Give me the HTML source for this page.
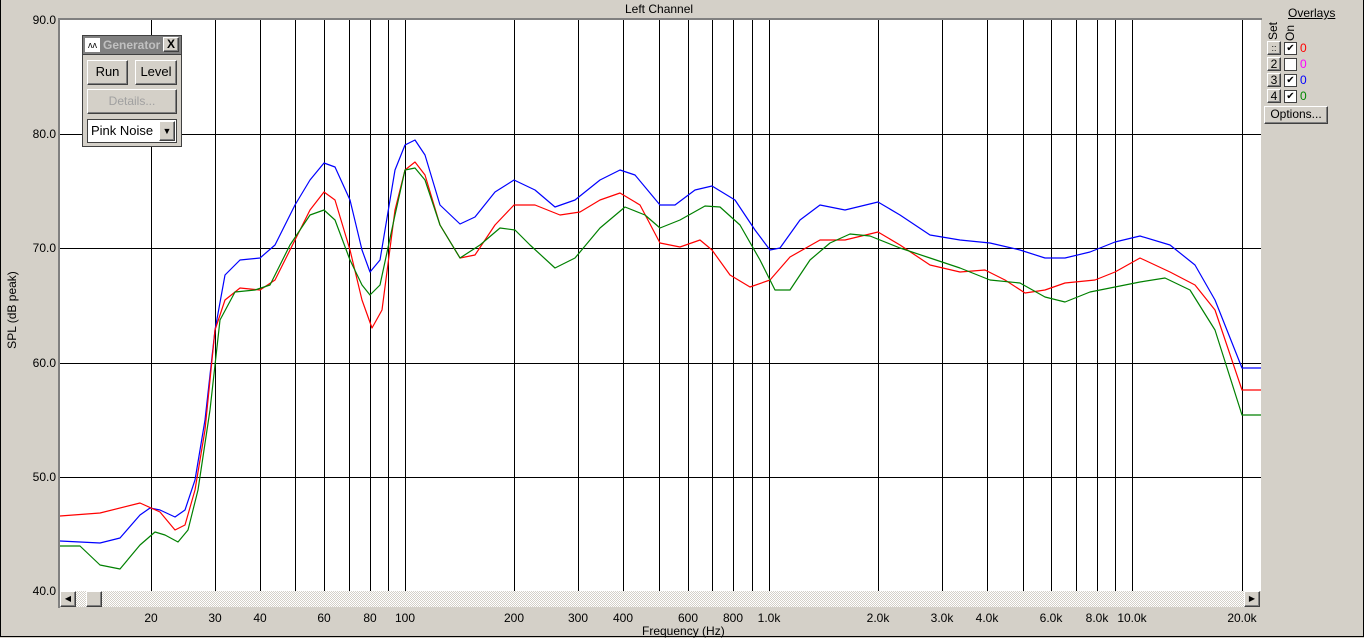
<!DOCTYPE html><html><head><style>
body{margin:0;width:1364px;height:638px;background:#d4d0c8;font-family:"Liberation Sans",sans-serif;font-size:12px;position:relative;overflow:hidden}
.a{position:absolute}
.btn{position:absolute;background:#d4d0c8;border:1px solid;border-color:#fff #404040 #404040 #fff;box-shadow:inset -1px -1px #808080;text-align:center;box-sizing:border-box}
.yl{position:absolute;right:1308px;width:50px;text-align:right}
.xl{position:absolute;top:611px;width:60px;margin-left:-30px;text-align:center}
</style></head><body>
<div class="a" style="left:0;top:0;width:1362px;height:636px;border:1px solid #000;border-top:none"></div>
<div class="a" style="left:0;top:2px;width:1310px;text-align:center;left:0">
<span class="a" style="left:625px;top:0">Left Channel</span></div>
<div class="a" style="left:58px;top:18px;width:2px;height:590px;background:#808080"></div>
<div class="a" style="left:58px;top:18px;width:1204px;height:2px;background:#808080"></div>
<svg class="a" style="left:60px;top:20px" width="1201" height="571" viewBox="60 20 1201 571">
<rect x="60" y="20" width="1201" height="571" fill="#fff"/>
<g stroke="#000" stroke-width="1">
<path d="M60 134.5H1261M60 248.5H1261M60 363.5H1261M60 477.5H1261"/>
<path d="M151.5 20V591M215.5 20V591M260.5 20V591M295.5 20V591M324.5 20V591M349.5 20V591M370.5 20V591M388.5 20V591M405.5 20V591M514.5 20V591M578.5 20V591M623.5 20V591M659.5 20V591M688.5 20V591M712.5 20V591M733.5 20V591M752.5 20V591M769.5 20V591M878.5 20V591M942.5 20V591M987.5 20V591M1023.5 20V591M1051.5 20V591M1076.5 20V591M1097.5 20V591M1115.5 20V591M1132.5 20V591M1242.5 20V591"/>
</g>
<g fill="none" stroke-width="1.2" stroke-linejoin="round">
<polyline stroke="#0000ff" points="60,541 100,543 120,538 140,515 150,508 160,510 175,517 185,510 195,480 205,420 215,330 225,275 240,260 260,258 275,245 295,205 310,180 324,163 335,167 350,200 362,250 370,272 380,260 395,170 405,145 415,140 425,155 440,205 460,224 475,217 495,192 514,180 535,190 555,207 575,200 600,180 620,170 635,175 660,205 675,205 695,190 712,186 735,200 755,230 770,250 780,248 800,220 820,205 845,210 878,202 900,215 930,235 960,240 990,243 1020,250 1045,258 1065,258 1090,252 1115,242 1140,236 1170,245 1195,265 1215,300 1242,368 1261,368"/>
<polyline stroke="#ff0000" points="60,516 100,513 140,503 160,512 175,530 185,525 195,490 205,430 215,330 225,300 240,288 260,290 275,280 295,240 310,210 324,192 335,200 350,250 362,300 372,328 382,310 395,210 405,170 415,162 425,175 440,225 460,258 475,255 495,225 514,205 535,205 560,215 580,212 600,200 620,193 640,205 660,243 680,247 700,240 712,250 730,275 750,287 770,280 790,257 820,240 845,240 878,232 900,245 930,265 960,272 985,270 1005,280 1025,293 1045,290 1065,283 1095,280 1115,272 1140,258 1170,272 1195,285 1215,310 1242,390 1261,390"/>
<polyline stroke="#008000" points="60,546 80,546 100,565 120,569 140,545 155,532 165,535 178,542 188,530 198,490 210,410 220,320 235,292 255,290 270,285 290,245 310,215 324,210 335,220 350,260 362,285 370,295 380,285 395,215 405,170 415,168 425,180 440,225 460,258 480,245 500,228 515,230 530,245 555,268 575,258 600,228 625,207 645,215 660,228 680,220 705,206 720,207 740,225 760,260 775,290 790,290 810,260 830,243 850,234 870,236 900,248 930,258 960,268 990,280 1020,283 1045,297 1065,302 1090,292 1115,287 1140,282 1165,278 1190,290 1215,330 1242,415 1261,415"/>
</g>
</svg>
<div class="a" style="left:60px;top:591px;width:1200px;height:16px;background:repeating-conic-gradient(#d4d0c8 0 25%,#fff 0 50%) 0 0/2px 2px"></div>
<div class="btn" style="left:60px;top:591px;width:16px;height:16px;font-size:8px;line-height:14px">◀</div>
<div class="btn" style="left:86px;top:591px;width:16px;height:16px"></div>
<div class="btn" style="left:1244px;top:591px;width:16px;height:16px;font-size:8px;line-height:14px">▶</div>
<div class="yl" style="top:13px">90.0</div><div class="yl" style="top:127px">80.0</div><div class="yl" style="top:241px">70.0</div><div class="yl" style="top:356px">60.0</div><div class="yl" style="top:470px">50.0</div><div class="yl" style="top:584px">40.0</div>
<div class="a" style="left:-38px;top:303px;width:100px;text-align:center;transform:rotate(-90deg)">SPL (dB peak)</div>
<div class="xl" style="left:151px">20</div><div class="xl" style="left:215px">30</div><div class="xl" style="left:260px">40</div><div class="xl" style="left:324px">60</div><div class="xl" style="left:370px">80</div><div class="xl" style="left:405px">100</div><div class="xl" style="left:514px">200</div><div class="xl" style="left:578px">300</div><div class="xl" style="left:623px">400</div><div class="xl" style="left:688px">600</div><div class="xl" style="left:733px">800</div><div class="xl" style="left:769px">1.0k</div><div class="xl" style="left:878px">2.0k</div><div class="xl" style="left:942px">3.0k</div><div class="xl" style="left:987px">4.0k</div><div class="xl" style="left:1051px">6.0k</div><div class="xl" style="left:1097px">8.0k</div><div class="xl" style="left:1132px">10.0k</div><div class="xl" style="left:1242px">20.0k</div>
<div class="a" style="left:642px;top:624px">Frequency (Hz)</div>
<!-- generator -->
<div class="a" style="left:82px;top:35px;width:100px;height:112px;background:#d4d0c8;border:1px solid #404040;box-sizing:border-box"></div>
<div class="a" style="left:83px;top:36px;width:98px;height:18px;background:#808080;border-bottom:1px solid #404040"></div>
<div class="a" style="left:85px;top:38px;width:15px;height:14px;background:#fff;font-size:9px;line-height:14px;text-align:center">ʌʌ</div>
<div class="a" style="left:103px;top:38px;color:#c0c0c0;font-weight:bold">Generator</div>
<div class="btn" style="left:163px;top:37px;width:16px;height:15px;font-weight:bold;line-height:13px">X</div>
<div class="btn" style="left:87px;top:60px;width:41px;height:25px;line-height:22px;font-size:13px">Run</div>
<div class="btn" style="left:135px;top:60px;width:42px;height:25px;line-height:22px;font-size:13px">Level</div>
<div class="btn" style="left:87px;top:89px;width:90px;height:25px;line-height:22px;color:#a0a0a0">Details...</div>
<div class="a" style="left:87px;top:119px;width:90px;height:24px;background:#fff;border:1px solid #404040;box-sizing:border-box;line-height:22px;padding-left:3px;font-size:13px">Pink Noise</div>
<div class="btn" style="left:159px;top:121px;width:16px;height:20px;font-size:9px;line-height:18px">▼</div>
<!-- overlays -->
<div class="a" style="left:1288px;top:6px;text-decoration:underline">Overlays</div>
<div class="a" style="left:1264px;top:24px;transform:rotate(-90deg);font-size:12px">Set</div>
<div class="a" style="left:1282px;top:26px;transform:rotate(-90deg);font-size:12px">On</div>
<div class="btn" style="left:1267px;top:41px;width:14px;height:14px;font-size:9px;line-height:12px">::</div>
<div class="btn" style="left:1267px;top:57px;width:14px;height:14px;line-height:12px">2</div>
<div class="btn" style="left:1267px;top:73px;width:14px;height:14px;line-height:12px">3</div>
<div class="btn" style="left:1267px;top:89px;width:14px;height:14px;line-height:12px">4</div>
<div class="a" style="left:1284px;top:42px;width:11px;height:11px;background:#fff;border:1px solid #404040;font-size:10px;line-height:11px;text-align:center">✔</div>
<div class="a" style="left:1284px;top:58px;width:11px;height:11px;background:#fff;border:1px solid #404040"></div>
<div class="a" style="left:1284px;top:74px;width:11px;height:11px;background:#fff;border:1px solid #404040;font-size:10px;line-height:11px;text-align:center">✔</div>
<div class="a" style="left:1284px;top:90px;width:11px;height:11px;background:#fff;border:1px solid #404040;font-size:10px;line-height:11px;text-align:center">✔</div>
<div class="a" style="left:1300px;top:41px;color:#f00">0</div>
<div class="a" style="left:1300px;top:57px;color:#f0f">0</div>
<div class="a" style="left:1300px;top:73px;color:#00f">0</div>
<div class="a" style="left:1300px;top:89px;color:#080">0</div>
<div class="btn" style="left:1264px;top:106px;width:64px;height:18px;line-height:15px">Options...</div>
</body></html>
